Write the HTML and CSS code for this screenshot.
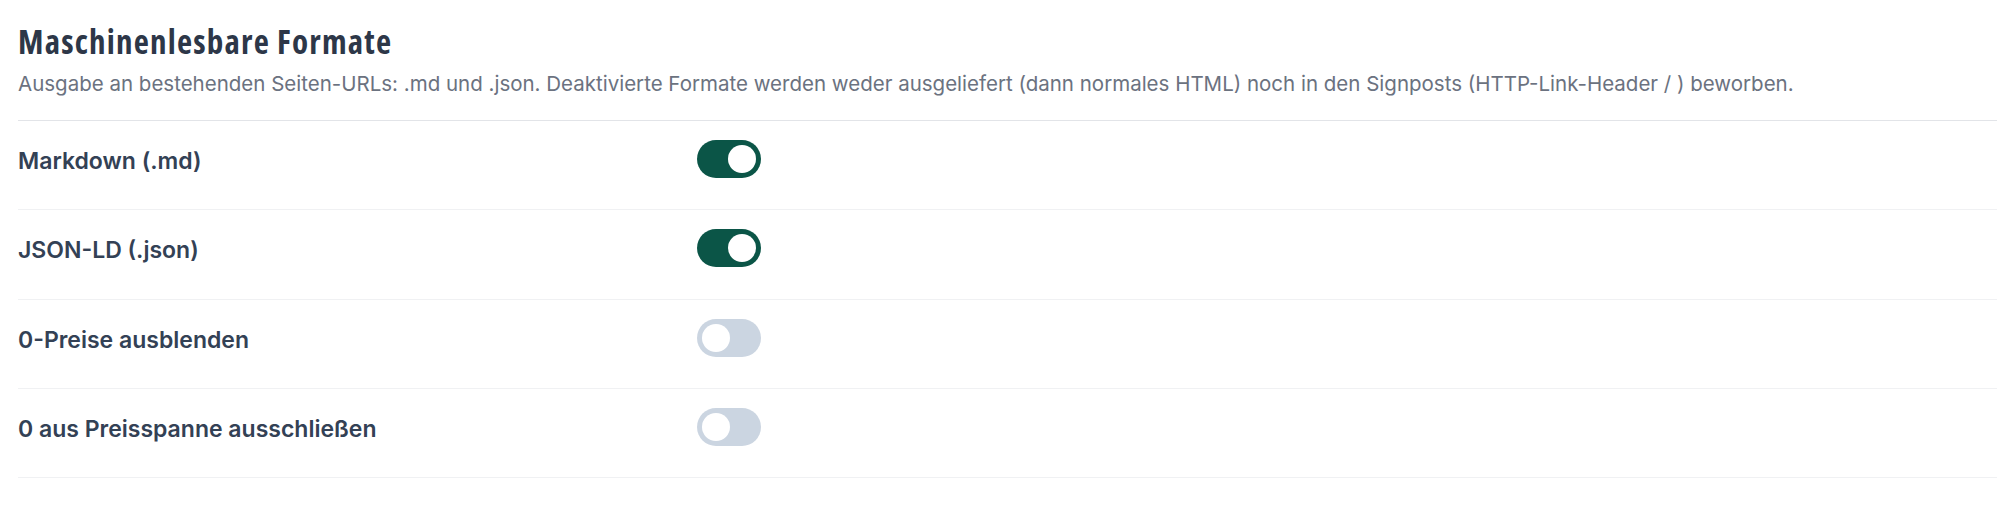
FILE: index.html
```html
<!DOCTYPE html>
<html lang="de">
<head>
<meta charset="utf-8">
<title>Maschinenlesbare Formate</title>
<link rel="stylesheet" href="styles.css">
</head>
<body>
<section class="panel">
	<header class="panel-head">
		<h2>Maschinenlesbare Formate</h2>
		<p>Ausgabe an bestehenden Seiten-URLs: .md und .json. Deaktivierte Formate werden weder ausgeliefert (dann normales HTML) noch in den Signposts (HTTP-Link-Header / ) beworben.</p>
	</header>
	<div class="row">
		<span class="label">Markdown (.md)</span>
		<span class="switch on"><i></i></span>
	</div>
	<div class="row">
		<span class="label">JSON-LD (.json)</span>
		<span class="switch on"><i></i></span>
	</div>
	<div class="row">
		<span class="label">0-Preise ausblenden</span>
		<span class="switch"><i></i></span>
	</div>
	<div class="row">
		<span class="label">0 aus Preisspanne ausschließen</span>
		<span class="switch"><i></i></span>
	</div>
</section>
</body>
</html>
```
FILE: styles.css
```css
* {padding:0;margin:0;box-sizing:border-box;}
body {background:#fff;font-family:Inter, "Noto Sans", sans-serif;color:#334155;}
.panel {margin:0 13px 0 18px;}
/* Kopfbereich */
.panel-head {padding-top:22px;padding-bottom:22px;border-bottom:1px solid #e2e4e8;}
.panel-head h2 {font-family:"Open Sans", "DejaVu Sans Condensed", sans-serif;font-stretch:75%;font-weight:700;font-size:33px;line-height:39px;letter-spacing:1.2px;color:#2d3748;}
.panel-head p {margin-top:9px;font-size:20.5px;line-height:28px;color:#6b7280;}
/* Zeilen */
.row {display:grid;grid-template-columns:679px 64px;align-items:center;height:89.3px;border-bottom:1px solid #f0f1f3;}
.label {font-size:23px;font-weight:600;color:#334155;margin-top:-8px;}
.switch {position:relative;display:block;width:64px;height:38px;border-radius:19px;background:#cbd5e1;margin-top:-12px;}
.switch i {position:absolute;top:5px;left:5px;width:28px;height:28px;border-radius:50%;background:#fff;}
.switch.on {background:#0b5547;}
.switch.on i {left:31px;}
```
